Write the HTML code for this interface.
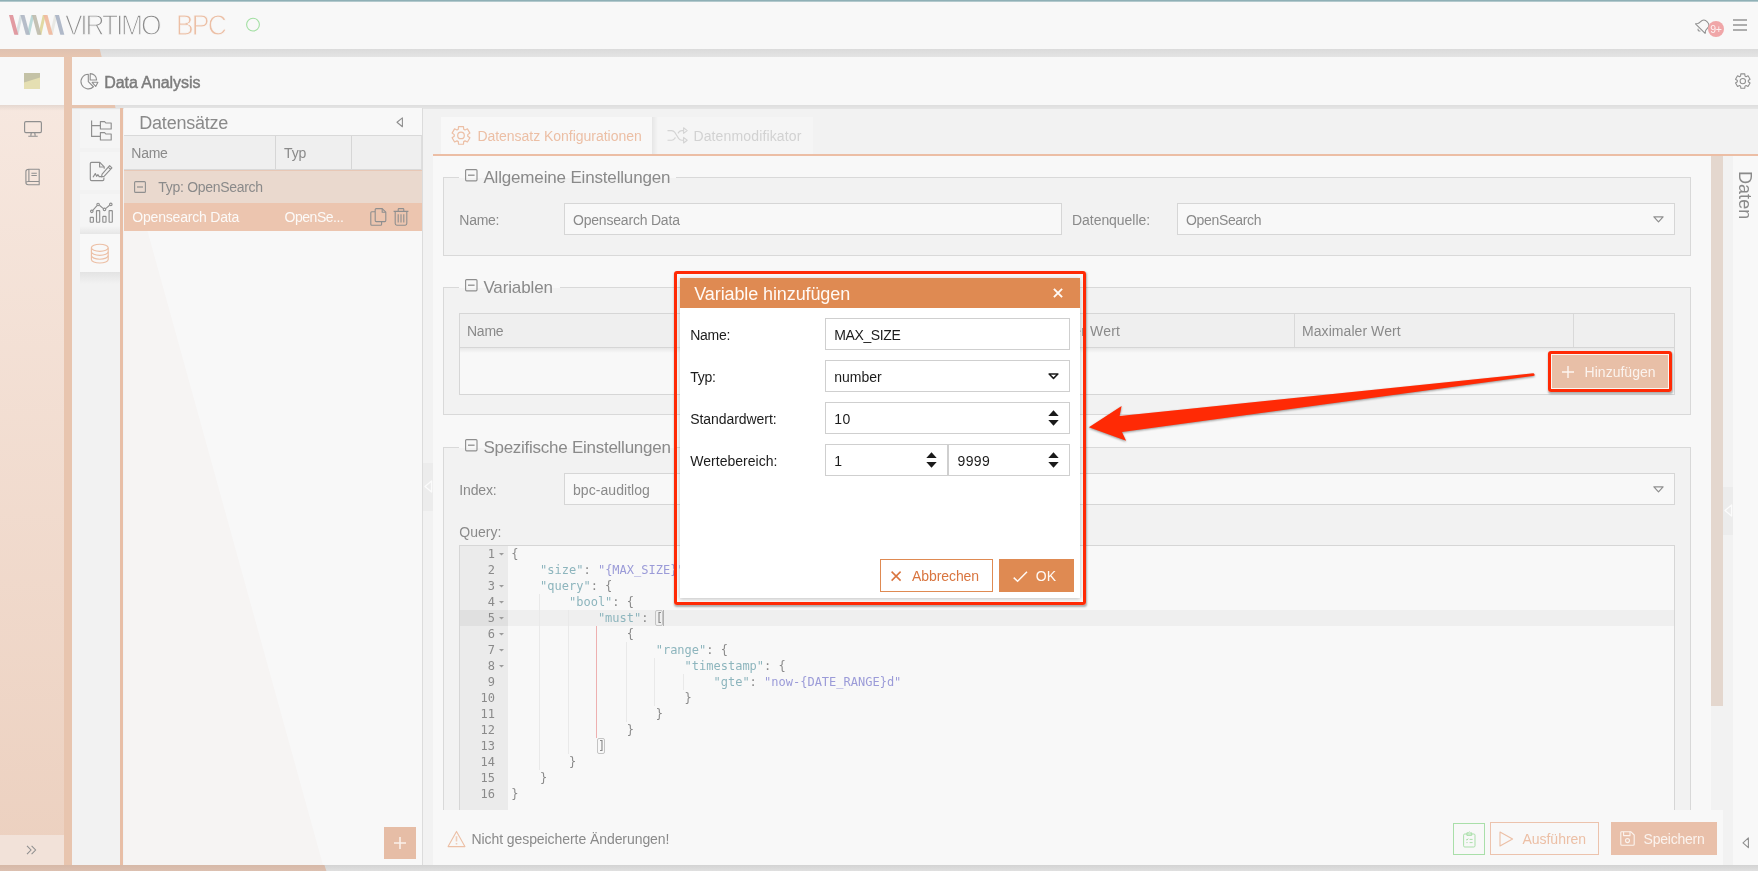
<!DOCTYPE html>
<html lang="de">
<head>
<meta charset="utf-8">
<title>Virtimo BPC - Data Analysis</title>
<style>
*{box-sizing:border-box;margin:0;padding:0}
html,body{width:1758px;height:871px;overflow:hidden}
body{background:#f2f2f2;font-family:"Liberation Sans",sans-serif;font-size:13px;color:#8c8c8c;position:relative}
.a{position:absolute}
.t{position:absolute;white-space:nowrap;line-height:1}
svg{position:absolute;overflow:visible}
/* ---------- app frame ---------- */
#topline{left:0;top:0;width:1758px;height:2px;background:linear-gradient(#8fb0b6 0,#8fb0b6 55%,#dfe8ea 100%)}
#header{left:0;top:2px;width:1758px;height:47px;background:#f8f8f8}
#band1{left:0;top:49px;width:1758px;height:8px;background:linear-gradient(#dbdbdb,#e4e4e4)}
#band1o{left:0;top:49px;width:102px;height:8px;background:linear-gradient(#dfc2b1,#e7c6b1);clip-path:polygon(0 0,99.7px 0,101.7px 100%,0 100%)}
#side{left:0;top:57px;width:64px;height:814px;background:linear-gradient(#f7e9e1,#ecd0bf)}
#sidesel{left:0;top:57px;width:64px;height:48px;background:#f8f8f8}
#vbar{left:64px;top:57px;width:8px;height:814px;background:#e8c5af}
#phead{left:72px;top:57px;width:1686px;height:48px;background:#f8f8f8}
#band2{left:72px;top:105px;width:1686px;height:3.5px;background:linear-gradient(#dedede,#e6e6e6)}
#band2o{left:72px;top:105px;width:43.6px;height:3px;background:#e6c4af;clip-path:polygon(0 0,42.8px 0,43.6px 100%,0 100%)}
#sideshadow{left:0;top:105px;width:64px;height:6px;background:linear-gradient(rgba(0,0,0,0.07),rgba(0,0,0,0))}
#bottomband{left:0;top:865px;width:1758px;height:6px;background:linear-gradient(#d3d3d3,#e0e0e0)}
#bottombando{left:0;top:865px;width:327px;height:6px;background:linear-gradient(#d6b8a7,#dcc0b0);clip-path:polygon(0 0,324.4px 0,326.4px 100%,0 100%)}
#wrap{left:0;top:0;width:1758px;height:871px;will-change:transform}
#sidefoot{left:0;top:835px;width:64px;height:30px;background:#f2e2d9}
</style>
</head>
<body>
<!-- app frame -->
<div class="a" id="header"></div>
<div class="a" id="topline"></div>
<div class="a" id="band1"></div><div class="a" id="band1o"></div>
<div class="a" id="side"></div><div class="a" id="sidesel"></div><div class="a" id="sidefoot"></div><div class="a" id="sideshadow"></div>
<div class="a" id="vbar"></div>
<div class="a" id="phead"></div>
<div class="a" id="band2"></div><div class="a" id="band2o"></div>
<div class="a" id="bottomband"></div><div class="a" id="bottombando"></div>

<div class="a" id="wrap">
<svg style="left:0px;top:0px" width="70" height="49" viewBox="0 0 70 49" ><polygon points="15.3,34.8 18.4,34.8 22.7,15.1 19.8,15.1" fill="#d9e1e3"/><polygon points="26.8,34.8 29.9,34.8 34.2,15.1 31.3,15.1" fill="#bcdada"/><polygon points="38.3,34.8 41.4,34.8 45.7,15.1 42.8,15.1" fill="#e1d9a2"/><polygon points="49.8,34.8 52.9,34.8 57.2,15.1 54.3,15.1" fill="#e9e9e5"/><polygon points="9.0,15.1 13.0,15.1 18.3,34.8 14.3,34.8" fill="#e0939b" fill-opacity="0.93"/><polygon points="20.5,15.1 24.5,15.1 29.8,34.8 25.8,34.8" fill="#b0b8c5" fill-opacity="0.93"/><polygon points="32.0,15.1 36.0,15.1 41.3,34.8 37.3,34.8" fill="#bfbcae" fill-opacity="0.93"/><polygon points="43.5,15.1 47.5,15.1 52.8,34.8 48.8,34.8" fill="#f0b99e" fill-opacity="0.93"/><polygon points="55.0,15.1 59.0,15.1 64.3,34.8 60.3,34.8" fill="#aab4c5" fill-opacity="0.93"/></svg>
<span class="t" style="left:64.9px;top:13px;font-size:26.5px;color:#8c8c8c;letter-spacing:-2.205px;-webkit-text-stroke:1.15px #f8f8f8;transform-origin:0 22px;transform:scaleY(1.1);">VIRTIMO</span>
<span class="t" style="left:176px;top:13px;font-size:26.5px;color:#ecbfa5;letter-spacing:-1.833px;-webkit-text-stroke:0.8px #f8f8f8;transform-origin:0 22px;transform:scaleY(1.08);">BPC</span>
<svg style="left:245px;top:17px" width="16" height="16" viewBox="0 0 16 16" ><circle cx="8" cy="7.6" r="6.4" fill="none" stroke="#a3dfa3" stroke-width="1.1"/></svg>
<svg style="left:1693.5px;top:16.5px" width="18" height="18" viewBox="0 0 18 18" ><g transform="rotate(45 9 9)" fill="none" stroke="#8f8f8f" stroke-width="1.05" stroke-linejoin="round" stroke-linecap="round"><path d="M2.2 12.8 L3.6 11 Q4.2 10 4.2 8 Q4.2 3 9 3 Q13.8 3 13.8 8 Q13.8 10 14.4 11 L15.8 12.8 Z"/><path d="M7.6 14.6 Q9 16.3 10.4 14.6"/></g></svg>
<div class="a" style="left:1708px;top:21px;width:16px;height:16px;background:#f0a6a8;border-radius:8px"></div>
<span class="t" style="left:1710.2px;top:24px;font-size:10.5px;color:#fdf1f1;letter-spacing:-0.392px;">9+</span>
<div class="a" style="left:1733px;top:19px;width:14px;height:2px;background:#adadad;"></div>
<div class="a" style="left:1733px;top:24px;width:14px;height:2px;background:#adadad;"></div>
<div class="a" style="left:1733px;top:29px;width:14px;height:2px;background:#adadad;"></div>
<svg style="left:1735px;top:73px" width="16" height="16" viewBox="0 0 16 16" ><path d="M5.78 0.88 L9.82 0.88 L9.98 3.05 L11.08 3.68 L13.05 2.74 L15.06 6.23 L13.26 7.47 L13.26 8.73 L15.06 9.97 L13.05 13.46 L11.08 12.52 L9.98 13.15 L9.82 15.32 L5.78 15.32 L5.62 13.15 L4.52 12.52 L2.55 13.46 L0.54 9.97 L2.34 8.73 L2.34 7.47 L0.54 6.23 L2.55 2.74 L4.52 3.68 L5.62 3.05 Z" fill="none" stroke="#8f8f8f" stroke-width="1.05" stroke-linejoin="round"/><circle cx="7.8" cy="8.1" r="2.7" fill="none" stroke="#8f8f8f" stroke-width="1.05"/></svg>

<svg style="left:24px;top:73px" width="16" height="16" viewBox="0 0 16 16" ><rect width="16" height="16" fill="#e5dfb2"/><polygon points="0,0 16,0 16,4.5 0,9.5" fill="#c4c2a6"/></svg>
<svg style="left:24px;top:121px" width="18" height="16" viewBox="0 0 18 16" ><rect x="0.6" y="0.6" width="16.8" height="11" rx="1.3" fill="none" stroke="#8f8f8f" stroke-width="1.15"/><path d="M7.3 11.6 L6.8 14.6 M10.7 11.6 L11.2 14.6 M4.3 15.2 H13.7" fill="none" stroke="#8f8f8f" stroke-width="1.15"/></svg>
<svg style="left:24.5px;top:168px" width="15" height="18" viewBox="0 0 15 18" ><path d="M3.9 1.3 H14.2 V13.5 H3.9 Z M3.9 1.3 Q0.9 1.3 0.9 3.6 V14.6 Q0.9 16.8 3.2 16.8 H14.2 V13.5 M0.9 14.9 Q0.9 13.5 3.2 13.5 H3.9 M6.4 5.2 H11.8 M6.4 7.5 H11.8" fill="none" stroke="#8f8f8f" stroke-width="1.1" stroke-linejoin="round"/></svg>
<svg style="left:26px;top:845px" width="11" height="10" viewBox="0 0 11 10" ><path d="M1 0.8 L5 5 L1 9.2 M5.6 0.8 L9.6 5 L5.6 9.2" fill="none" stroke="#8f8f8f" stroke-width="1.05"/></svg>

<svg style="left:80.6px;top:73px" width="18" height="17" viewBox="0 0 18 17" ><g fill="none" stroke="#8f8f8f" stroke-width="1.1" stroke-linejoin="round"><path d="M7.3 1.3 A7.3 7.3 0 1 0 12.46 13.76 L7.3 8.6 Z"/><path d="M9.2 0.6 A6.4 6.4 0 0 1 15.6 7 H9.2 Z"/><path d="M11.2 9.3 H16.9 L14.7 13.5 Z"/></g></svg>
<span class="t" style="left:104.3px;top:75px;font-size:16px;color:#7c7c7c;letter-spacing:-0.071px;-webkit-text-stroke:0.45px #7c7c7c;">Data Analysis</span>
<div class="a" style="left:80px;top:110px;width:40px;height:38px;background:#f5f5f5;"></div>
<div class="a" style="left:80px;top:152px;width:40px;height:38px;background:#f5f5f5;"></div>
<div class="a" style="left:80px;top:194px;width:40px;height:40px;background:linear-gradient(#f5f5f5 0,#f5f5f5 80%,#e6e6e6 100%);"></div>
<div class="a" style="left:80px;top:234px;width:40px;height:38px;background:#f8f8f8;"></div>
<div class="a" style="left:80px;top:272px;width:40px;height:12px;background:linear-gradient(#e3e3e3,#f2f2f2);"></div>
<svg style="left:76px;top:106px" width="50" height="170" viewBox="0 0 50 170" ><g fill="none" stroke="#8f8f8f" stroke-width="1.15" stroke-linejoin="round">
<path d="M15.6 14.6 V30.4 H24 M15.6 19.6 H24"/>
<path d="M24.4 15.6 h4.2 l1.2 1.4 h5.4 v6 h-10.8 z M24.4 26.6 h4.2 l1.2 1.4 h5.4 v6 h-10.8 z"/>
<path d="M28.2 62.8 V60.8 L23.8 56.3 H15.6 Q14.3 56.3 14.3 57.6 V73.3 Q14.3 74.6 15.6 74.6 H26.6 Q27.9 74.6 27.9 73.3 V71.5"/>
<path d="M23.6 56.6 V61 H28"/>
<path d="M17 71.3 L19.3 67.6 L20.6 70.3 L21.9 68.6 L23.2 70.6 H25.4"/>
<path d="M33.6 59.6 L35.9 61.9 L28.3 70.2 L25.5 70.9 L26.1 68.1 Z M32.2 61.1 L34.5 63.4"/>
<rect x="14.2" y="111.4" width="3.2" height="4.8" rx="0.5"/><rect x="20.5" y="104.6" width="3.2" height="11.6" rx="0.5"/><rect x="26.8" y="110.4" width="3.2" height="5.8" rx="0.5"/><rect x="33.1" y="104.6" width="3.2" height="11.6" rx="0.5"/>
<path d="M16.8 104.3 L21 99.6 M23.4 99.3 L27.4 102.6 M29.6 102.6 L33.6 99.3"/>
<circle cx="15.8" cy="105.3" r="1.25"/><circle cx="22.1" cy="98.5" r="1.25"/><circle cx="28.5" cy="103.4" r="1.25"/><circle cx="34.8" cy="98.4" r="1.25"/>
</g>
<g fill="none" stroke="#ecbfa5" stroke-width="1.15">
<ellipse cx="23.8" cy="141.8" rx="8.4" ry="3.6"/>
<path d="M15.4 141.8 V153.4 A8.4 3.6 0 0 0 32.2 153.4 V141.8"/>
<path d="M15.4 145.7 A8.4 3.6 0 0 0 32.2 145.7 M15.4 149.6 A8.4 3.6 0 0 0 32.2 149.6"/>
</g></svg>
<div class="a" style="left:120.4px;top:108px;width:2.8px;height:757px;background:#e8bea6;"></div>
<div class="a" style="left:124px;top:108px;width:298px;height:757px;background:#f8f8f8;"></div>
<svg style="left:0px;top:0px" width="1758" height="871" viewBox="0 0 1758 871" ><polygon points="124,231 124,865 323,865 147.5,231" fill="rgba(160,90,40,0.022)"/></svg>
<span class="t" style="left:139.3px;top:114px;font-size:18px;color:#8a8a8a;letter-spacing:-0.227px;">Datensätze</span>
<svg style="left:396px;top:117px" width="8" height="11" viewBox="0 0 8 11" ><path d="M6.4 0.9 V9.7 L1 5.3 Z" fill="none" stroke="#8f8f8f" stroke-width="1.1" stroke-linejoin="round"/></svg>
<div class="a" style="left:124px;top:135px;width:298px;height:35px;background:#efefef;border:1px solid #d9d9d9;border-left:none;border-right-color:#dedede"></div>
<div class="a" style="left:275px;top:136px;width:1px;height:33px;background:#d6d6d6;"></div>
<div class="a" style="left:351px;top:136px;width:1px;height:33px;background:#d6d6d6;"></div>
<span class="t" style="left:131.3px;top:146px;font-size:14px;color:#8a8a8a;letter-spacing:-0.25px;">Name</span>
<span class="t" style="left:284px;top:146px;font-size:14px;color:#8a8a8a;letter-spacing:-0.151px;">Typ</span>
<div class="a" style="left:124px;top:170px;width:298px;height:33px;background:#ead9ce;border-top:1px solid #e8c8b6"></div>
<svg style="left:134px;top:181px" width="12" height="12" viewBox="0 0 12 12" ><rect x="0.6" y="0.6" width="10.8" height="10.8" rx="1" fill="none" stroke="#8f8f8f" stroke-width="1.1"/><path d="M3 6 H9" stroke="#8f8f8f" stroke-width="1.2"/></svg>
<span class="t" style="left:158.3px;top:180px;font-size:14px;color:#8a8a8a;letter-spacing:-0.303px;">Typ: OpenSearch</span>
<div class="a" style="left:124px;top:203px;width:298px;height:28px;background:#ecc5af;"></div>
<span class="t" style="left:132.3px;top:210px;font-size:14px;color:#fcfaf8;letter-spacing:-0.2px;">Opensearch Data</span>
<span class="t" style="left:284.5px;top:210px;font-size:14px;color:#fcfaf8;letter-spacing:-0.467px;">OpenSe...</span>
<svg style="left:370px;top:208px" width="17" height="18" viewBox="0 0 17 18" ><g fill="none" stroke="#8f8f8f" stroke-width="1.1" stroke-linejoin="round"><path d="M5.2 1.6 Q5.2 0.6 6.2 0.6 H12.2 L15.8 4.2 V12.6 Q15.8 13.6 14.8 13.6 H6.2 Q5.2 13.6 5.2 12.6 Z"/><path d="M12.2 0.6 V4.2 H15.8"/><path d="M5 3.8 H1.8 Q0.8 3.8 0.8 4.8 V16.2 Q0.8 17.2 1.8 17.2 H10.6 Q11.6 17.2 11.6 16.2 V13.8"/></g></svg>
<svg style="left:393px;top:208px" width="16" height="18" viewBox="0 0 16 18" ><path d="M0.6 3.4 H15.4 M5.2 3.2 V1.4 Q5.2 0.6 6 0.6 H10 Q10.8 0.6 10.8 1.4 V3.2 M2.2 3.6 V15.6 Q2.2 17.2 3.8 17.2 H12.2 Q13.8 17.2 13.8 15.6 V3.6 M5.2 6.2 V14.6 M8 6.2 V14.6 M10.8 6.2 V14.6" fill="none" stroke="#8f8f8f" stroke-width="1.1"/></svg>
<div class="a" style="left:384px;top:827px;width:32px;height:32px;background:#e6bda6;"></div>
<svg style="left:393px;top:836px" width="14" height="14" viewBox="0 0 14 14" ><path d="M7 1 V13 M1 7 H13" stroke="#fbf1ea" stroke-width="1.6" fill="none"/></svg>

<div class="a" style="left:422px;top:108px;width:1px;height:757px;background:#dcdcdc;"></div>
<div class="a" style="left:423px;top:463px;width:10px;height:48px;background:#ececec;"></div>
<svg style="left:424px;top:480px" width="9" height="13" viewBox="0 0 9 13" ><path d="M7.6 1 V12 L1 6.5 Z" fill="none" stroke="#fbfbfb" stroke-width="1.3" stroke-linejoin="round"/></svg>
<div class="a" style="left:433px;top:156px;width:1290px;height:709px;background:#f8f8f8;"></div>
<div class="a" style="left:441px;top:117px;width:211px;height:37px;background:#f8f8f8;"></div>
<div class="a" style="left:652px;top:117px;width:6px;height:37px;background:linear-gradient(90deg,#e6e6e6,#f5f5f5);"></div>
<div class="a" style="left:658px;top:117px;width:155px;height:37px;background:#f5f5f5;"></div>
<div class="a" style="left:433px;top:154px;width:1325px;height:2px;background:#ecbea5;"></div>
<svg style="left:451px;top:126px" width="20" height="20" viewBox="0 0 20 20" ><path d="M7.53 0.54 L12.47 0.54 L12.70 3.16 L14.05 3.94 L16.44 2.83 L18.91 7.11 L16.75 8.62 L16.75 10.18 L18.91 11.69 L16.44 15.97 L14.05 14.86 L12.70 15.64 L12.47 18.26 L7.53 18.26 L7.30 15.64 L5.95 14.86 L3.56 15.97 L1.09 11.69 L3.25 10.18 L3.25 8.62 L1.09 7.11 L3.56 2.83 L5.95 3.94 L7.30 3.16 Z" fill="none" stroke="#ecbfa5" stroke-width="1.2" stroke-linejoin="round"/><circle cx="10" cy="9.4" r="3.3" fill="none" stroke="#ecbfa5" stroke-width="1.2"/></svg>
<span class="t" style="left:477.4px;top:129px;font-size:14px;color:#ecbfa5;letter-spacing:-0.028px;">Datensatz Konfigurationen</span>
<svg style="left:667px;top:126.8px" width="21" height="17" viewBox="0 0 21 17" ><g fill="none" stroke="#d4d4d4" stroke-width="1.1" stroke-linejoin="round"><path d="M0.5 3.6 H4.6 Q6.6 3.6 7.8 5.4 L11.6 11.4 Q12.8 13.2 14.8 13.2 H16.4 M0.5 13.2 H4.6 Q6.6 13.2 7.8 11.4 L8.4 10.4 M11 6.4 L11.6 5.4 Q12.8 3.6 14.8 3.6 H16.4"/><path d="M16.6 0.8 L20.2 3.6 L16.6 6.4 Z M16.6 10.4 L20.2 13.2 L16.6 16 Z"/></g></svg>
<span class="t" style="left:693.4px;top:129px;font-size:14px;color:#d2d2d2;letter-spacing:0.147px;">Datenmodifikator</span>
<div class="a" style="left:1711px;top:156px;width:12px;height:654px;background:#f2f2f2;"></div>
<div class="a" style="left:1711px;top:156px;width:12px;height:550px;background:#e4d7ce;"></div>
<div class="a" style="left:1723px;top:156px;width:10px;height:709px;background:#f2f2f2;"></div>
<div class="a" style="left:1723px;top:487px;width:10px;height:48px;background:#ececec;"></div>
<svg style="left:1724px;top:504px" width="9" height="13" viewBox="0 0 9 13" ><path d="M7.6 1 V12 L1 6.5 Z" fill="none" stroke="#fbfbfb" stroke-width="1.3" stroke-linejoin="round"/></svg>
<div class="a" style="left:1733px;top:156px;width:25px;height:709px;background:#f8f8f8;"></div>
<span class="t" style="left:1736.2px;top:171.2px;font-size:18px;color:#8a8a8a;letter-spacing:0.041px;transform-origin:0 0;transform:rotate(90deg) translateY(-100%);">Daten</span>
<svg style="left:1742px;top:837px" width="8" height="12" viewBox="0 0 8 12" ><path d="M6.4 0.9 V10.7 L1 5.8 Z" fill="none" stroke="#8f8f8f" stroke-width="1.1" stroke-linejoin="round"/></svg>
<div class="a" style="left:443px;top:177px;width:1248px;height:79px;background:#f2f2f2;border:1px solid #d9d9d9;"></div>
<div class="a" style="left:459px;top:177px;width:217px;height:1px;background:#f8f8f8;"></div>
<div class="a" style="left:459px;top:165px;width:217px;height:12px;background:#f8f8f8;"></div>
<svg style="left:465.3px;top:168.8px" width="13" height="13" viewBox="0 0 13 13" ><rect x="0.6" y="0.6" width="11.4" height="11.2" rx="1" fill="none" stroke="#8f8f8f" stroke-width="1.15"/><path d="M3 6.2 H9.6" stroke="#8f8f8f" stroke-width="1.3"/></svg>
<span class="t" style="left:483.4px;top:169px;font-size:17px;color:#8a8a8a;letter-spacing:-0.166px;">Allgemeine Einstellungen</span>
<span class="t" style="left:459.3px;top:213px;font-size:14px;color:#8a8a8a;letter-spacing:-0.275px;">Name:</span>
<div class="a" style="left:564px;top:203px;width:498px;height:32px;background:#f8f8f8;border:1px solid #d6d6d6;"></div>
<span class="t" style="left:573px;top:213px;font-size:14px;color:#8a8a8a;letter-spacing:-0.2px;">Opensearch Data</span>
<span class="t" style="left:1072px;top:213px;font-size:14px;color:#8a8a8a;letter-spacing:-0.047px;">Datenquelle:</span>
<div class="a" style="left:1177px;top:203px;width:498px;height:32px;background:#f8f8f8;border:1px solid #d6d6d6;"></div>
<span class="t" style="left:1186px;top:213px;font-size:14px;color:#8a8a8a;letter-spacing:-0.341px;">OpenSearch</span>
<svg style="left:1652.5px;top:216px" width="11" height="7" viewBox="0 0 11 7" ><path d="M0.9 0.8 H10.1 L5.5 5.9 Z" fill="none" stroke="#8f8f8f" stroke-width="1.2" stroke-linejoin="round"/></svg>
<div class="a" style="left:443px;top:287px;width:1248px;height:128px;background:#f2f2f2;border:1px solid #d9d9d9;"></div>
<div class="a" style="left:459px;top:287px;width:101px;height:1px;background:#f8f8f8;"></div>
<div class="a" style="left:459px;top:275px;width:101px;height:12px;background:#f8f8f8;"></div>
<svg style="left:465.3px;top:278.8px" width="13" height="13" viewBox="0 0 13 13" ><rect x="0.6" y="0.6" width="11.4" height="11.2" rx="1" fill="none" stroke="#8f8f8f" stroke-width="1.15"/><path d="M3 6.2 H9.6" stroke="#8f8f8f" stroke-width="1.3"/></svg>
<span class="t" style="left:483.4px;top:279px;font-size:17px;color:#8a8a8a;letter-spacing:-0.128px;">Variablen</span>
<div class="a" style="left:459px;top:313px;width:1216px;height:82px;background:#f8f8f8;border:1px solid #d6d6d6;"></div>
<div class="a" style="left:460px;top:314px;width:1214px;height:34px;background:#efefef;border-bottom:1px solid #d6d6d6"></div>
<div class="a" style="left:460px;top:348px;width:1214px;height:5px;background:linear-gradient(#e8e8e8,#f8f8f8);"></div>
<div class="a" style="left:1294px;top:314px;width:1px;height:33px;background:#d9d9d9;"></div>
<div class="a" style="left:1573px;top:314px;width:1px;height:33px;background:#d9d9d9;"></div>
<span class="t" style="left:467px;top:324px;font-size:14px;color:#8a8a8a;letter-spacing:-0.25px;">Name</span>
<span class="t" style="left:1024.0px;top:324px;font-size:14px;color:#8a8a8a;letter-spacing:0.153px;">Minimaler Wert</span>
<span class="t" style="left:1302px;top:324px;font-size:14px;color:#8a8a8a;letter-spacing:0.065px;">Maximaler Wert</span>
<div class="a" style="left:1551px;top:354px;width:118px;height:35px;background:#fbf6f2;"></div>
<div class="a" style="left:1552px;top:355px;width:116px;height:33px;background:#e8bfa7;"></div>
<svg style="left:1562px;top:366px" width="12" height="12" viewBox="0 0 12 12" ><path d="M6 0 V12 M0 6 H12" stroke="#fdf6f1" stroke-width="1.4" fill="none"/></svg>
<span class="t" style="left:1584.6px;top:365px;font-size:14px;color:#fbf3ee;letter-spacing:0.016px;">Hinzufügen</span>
<div class="a" style="left:443px;top:447px;width:1248px;height:380px;background:#f2f2f2;border:1px solid #d9d9d9;"></div>
<div class="a" style="left:459px;top:447px;width:217px;height:1px;background:#f8f8f8;"></div>
<div class="a" style="left:459px;top:435px;width:217px;height:12px;background:#f8f8f8;"></div>
<svg style="left:465.3px;top:438.8px" width="13" height="13" viewBox="0 0 13 13" ><rect x="0.6" y="0.6" width="11.4" height="11.2" rx="1" fill="none" stroke="#8f8f8f" stroke-width="1.15"/><path d="M3 6.2 H9.6" stroke="#8f8f8f" stroke-width="1.3"/></svg>
<span class="t" style="left:483.4px;top:439px;font-size:17px;color:#8a8a8a;letter-spacing:-0.261px;">Spezifische Einstellungen</span>
<span class="t" style="left:459.3px;top:483px;font-size:14px;color:#8a8a8a;letter-spacing:-0.148px;">Index:</span>
<div class="a" style="left:564px;top:473px;width:1111px;height:32px;background:#f8f8f8;border:1px solid #d6d6d6;"></div>
<span class="t" style="left:573px;top:483px;font-size:14px;color:#8a8a8a;letter-spacing:0.055px;">bpc-auditlog</span>
<svg style="left:1652.5px;top:486px" width="11" height="7" viewBox="0 0 11 7" ><path d="M0.9 0.8 H10.1 L5.5 5.9 Z" fill="none" stroke="#8f8f8f" stroke-width="1.2" stroke-linejoin="round"/></svg>
<span class="t" style="left:459.3px;top:525px;font-size:14px;color:#8a8a8a;letter-spacing:0.018px;">Query:</span>
<div class="a" style="left:459px;top:545px;width:1216px;height:265px;background:#f8f8f8;border:1px solid #d6d6d6;border-bottom:none"></div>
<div class="a" style="left:460px;top:546px;width:48px;height:264px;background:#ebebeb;"></div>
<div class="a" style="left:460px;top:610px;width:48px;height:16px;background:#e0e0e0;"></div>
<div class="a" style="left:508px;top:610px;width:1166px;height:16px;background:#efefef;"></div>
<div class="a" style="left:539px;top:594px;width:1px;height:16px;background:#e9e9e9;"></div>
<div class="a" style="left:539px;top:610px;width:1px;height:16px;background:#e9e9e9;"></div>
<div class="a" style="left:568px;top:610px;width:1px;height:16px;background:#e9e9e9;"></div>
<div class="a" style="left:539px;top:626px;width:1px;height:16px;background:#e9e9e9;"></div>
<div class="a" style="left:568px;top:626px;width:1px;height:16px;background:#e9e9e9;"></div>
<div class="a" style="left:596px;top:626px;width:1px;height:16px;background:#eeb0b0;"></div>
<div class="a" style="left:539px;top:642px;width:1px;height:16px;background:#e9e9e9;"></div>
<div class="a" style="left:568px;top:642px;width:1px;height:16px;background:#e9e9e9;"></div>
<div class="a" style="left:596px;top:642px;width:1px;height:16px;background:#eeb0b0;"></div>
<div class="a" style="left:626px;top:642px;width:1px;height:16px;background:#e9e9e9;"></div>
<div class="a" style="left:539px;top:658px;width:1px;height:16px;background:#e9e9e9;"></div>
<div class="a" style="left:568px;top:658px;width:1px;height:16px;background:#e9e9e9;"></div>
<div class="a" style="left:596px;top:658px;width:1px;height:16px;background:#eeb0b0;"></div>
<div class="a" style="left:626px;top:658px;width:1px;height:16px;background:#e9e9e9;"></div>
<div class="a" style="left:654px;top:658px;width:1px;height:16px;background:#e9e9e9;"></div>
<div class="a" style="left:539px;top:674px;width:1px;height:16px;background:#e9e9e9;"></div>
<div class="a" style="left:568px;top:674px;width:1px;height:16px;background:#e9e9e9;"></div>
<div class="a" style="left:596px;top:674px;width:1px;height:16px;background:#eeb0b0;"></div>
<div class="a" style="left:626px;top:674px;width:1px;height:16px;background:#e9e9e9;"></div>
<div class="a" style="left:654px;top:674px;width:1px;height:16px;background:#e9e9e9;"></div>
<div class="a" style="left:683px;top:674px;width:1px;height:16px;background:#e9e9e9;"></div>
<div class="a" style="left:539px;top:690px;width:1px;height:16px;background:#e9e9e9;"></div>
<div class="a" style="left:568px;top:690px;width:1px;height:16px;background:#e9e9e9;"></div>
<div class="a" style="left:596px;top:690px;width:1px;height:16px;background:#eeb0b0;"></div>
<div class="a" style="left:626px;top:690px;width:1px;height:16px;background:#e9e9e9;"></div>
<div class="a" style="left:654px;top:690px;width:1px;height:16px;background:#e9e9e9;"></div>
<div class="a" style="left:539px;top:706px;width:1px;height:16px;background:#e9e9e9;"></div>
<div class="a" style="left:568px;top:706px;width:1px;height:16px;background:#e9e9e9;"></div>
<div class="a" style="left:596px;top:706px;width:1px;height:16px;background:#eeb0b0;"></div>
<div class="a" style="left:626px;top:706px;width:1px;height:16px;background:#e9e9e9;"></div>
<div class="a" style="left:539px;top:722px;width:1px;height:16px;background:#e9e9e9;"></div>
<div class="a" style="left:568px;top:722px;width:1px;height:16px;background:#e9e9e9;"></div>
<div class="a" style="left:596px;top:722px;width:1px;height:16px;background:#eeb0b0;"></div>
<div class="a" style="left:539px;top:738px;width:1px;height:16px;background:#e9e9e9;"></div>
<div class="a" style="left:568px;top:738px;width:1px;height:16px;background:#e9e9e9;"></div>
<div class="a" style="left:539px;top:754px;width:1px;height:16px;background:#e9e9e9;"></div>
<svg style="left:499px;top:553px" width="5" height="3" viewBox="0 0 5 3" ><path d="M0 0 H5 L2.5 2.6 Z" fill="#9c9c9c"/></svg>
<svg style="left:499px;top:585px" width="5" height="3" viewBox="0 0 5 3" ><path d="M0 0 H5 L2.5 2.6 Z" fill="#9c9c9c"/></svg>
<svg style="left:499px;top:601px" width="5" height="3" viewBox="0 0 5 3" ><path d="M0 0 H5 L2.5 2.6 Z" fill="#9c9c9c"/></svg>
<svg style="left:499px;top:617px" width="5" height="3" viewBox="0 0 5 3" ><path d="M0 0 H5 L2.5 2.6 Z" fill="#9c9c9c"/></svg>
<svg style="left:499px;top:633px" width="5" height="3" viewBox="0 0 5 3" ><path d="M0 0 H5 L2.5 2.6 Z" fill="#9c9c9c"/></svg>
<svg style="left:499px;top:649px" width="5" height="3" viewBox="0 0 5 3" ><path d="M0 0 H5 L2.5 2.6 Z" fill="#9c9c9c"/></svg>
<svg style="left:499px;top:665px" width="5" height="3" viewBox="0 0 5 3" ><path d="M0 0 H5 L2.5 2.6 Z" fill="#9c9c9c"/></svg>
<pre class="a" style="left:460px;top:546px;width:35px;text-align:right;color:#8a8a8a;font-family:'DejaVu Sans Mono','Liberation Mono',monospace;font-size:12px;line-height:16px;">1
2
3
4
5
6
7
8
9
10
11
12
13
14
15
16
</pre>
<pre class="a" style="left:511.2px;top:546px;font-family:'DejaVu Sans Mono','Liberation Mono',monospace;font-size:12px;line-height:16px;"><span style="color:#8a8a8a">{</span>
    <span style="color:#8db5bd">"size"</span><span style="color:#8a8a8a">: </span><span style="color:#9b9bd8">"{MAX_SIZE}"</span><span style="color:#8a8a8a">,</span>
    <span style="color:#8db5bd">"query"</span><span style="color:#8a8a8a">: {</span>
        <span style="color:#8db5bd">"bool"</span><span style="color:#8a8a8a">: {</span>
            <span style="color:#8db5bd">"must"</span><span style="color:#8a8a8a">: </span><span style="color:#8a8a8a">[</span>
                <span style="color:#8a8a8a">{</span>
                    <span style="color:#8db5bd">"range"</span><span style="color:#8a8a8a">: {</span>
                        <span style="color:#8db5bd">"timestamp"</span><span style="color:#8a8a8a">: {</span>
                            <span style="color:#8db5bd">"gte"</span><span style="color:#8a8a8a">: </span><span style="color:#9b9bd8">"now-{DATE_RANGE}d"</span>
                        <span style="color:#8a8a8a">}</span>
                    <span style="color:#8a8a8a">}</span>
                <span style="color:#8a8a8a">}</span>
            <span style="color:#8a8a8a">]</span>
        <span style="color:#8a8a8a">}</span>
    <span style="color:#8a8a8a">}</span>
<span style="color:#8a8a8a">}</span>
</pre>
<div class="a" style="left:655px;top:610px;width:8px;height:16px;border:1px solid #c4c4c4;border-radius:2px"></div>
<div class="a" style="left:663px;top:610px;width:1px;height:16px;background:#b0b0b0;"></div>
<div class="a" style="left:597px;top:738px;width:8px;height:16px;border:1px solid #c4c4c4;border-radius:2px"></div>
<div class="a" style="left:433px;top:810px;width:1290px;height:55px;background:#f8f8f8;"></div>
<svg style="left:446.5px;top:830px" width="19" height="18" viewBox="0 0 19 18" ><path d="M9.5 1.4 L17.9 16.6 H1.1 Z" fill="none" stroke="#ecbfa5" stroke-width="1.1" stroke-linejoin="round"/><path d="M9.5 6.2 V11.6 M9.5 13 V14.6" stroke="#f0cdb8" stroke-width="1.6"/></svg>
<span class="t" style="left:471.4px;top:832px;font-size:14px;color:#8a8a8a;letter-spacing:-0.068px;">Nicht gespeicherte Änderungen!</span>
<div class="a" style="left:1453px;top:823px;width:32px;height:32px;background:#f8f8f8;border:1px solid #a9dfa9;"></div>
<svg style="left:1462.5px;top:830.5px" width="13" height="17" viewBox="0 0 13 17" ><g fill="none" stroke="#a9dfa9" stroke-width="1"><rect x="0.6" y="3" width="11.4" height="13" rx="1.2"/><path d="M3.9 3 V1.8 H5.3 Q6.3 0 7.3 1.8 H8.7 V3 M3.9 3 V4.4 H8.7 V3 M3.2 8.4 L4 9.2 L5.2 7.6 M6.6 8.4 H9.6 M3.4 11.6 H4.6 M6.6 11.6 H9.6"/></g></svg>
<div class="a" style="left:1490px;top:822px;width:109px;height:33px;background:#f8f8f8;border:1px solid #ecc3ad;"></div>
<svg style="left:1499px;top:831px" width="15" height="16" viewBox="0 0 15 16" ><path d="M1 1 L13.6 8 L1 15 Z" fill="none" stroke="#ecbfa5" stroke-width="1.1" stroke-linejoin="round"/></svg>
<span class="t" style="left:1522.4px;top:832px;font-size:14px;color:#ecbfa5;letter-spacing:-0.012px;">Ausführen</span>
<div class="a" style="left:1611px;top:822px;width:106px;height:33px;background:#e9c0aa;"></div>
<svg style="left:1620px;top:831px" width="15" height="15" viewBox="0 0 15 15" ><g fill="none" stroke="#fbf3ee" stroke-width="1.1" stroke-linejoin="round"><path d="M1.6 0.8 H11 L14.2 4 V13.2 Q14.2 14.2 13.2 14.2 H1.8 Q0.8 14.2 0.8 13.2 V1.6 Q0.8 0.8 1.6 0.8 Z"/><path d="M3.6 0.8 V4.6 H10 V0.8"/><circle cx="7.5" cy="9.6" r="2"/></g></svg>
<span class="t" style="left:1643.6px;top:832px;font-size:14px;color:#fbf3ee;letter-spacing:-0.245px;">Speichern</span>

<div class="a" style="left:680px;top:278px;width:400px;height:320px;background:#ffffff;box-shadow:0 1px 4px 0 rgba(0,0,0,0.22)"></div>
<div class="a" style="left:680px;top:278px;width:400px;height:30px;background:#df8a52;"></div>
<span class="t" style="left:694.3px;top:285px;font-size:18px;color:#fffaf6;letter-spacing:-0.106px;">Variable hinzufügen</span>
<svg style="left:1053px;top:288px" width="10" height="10" viewBox="0 0 10 10" ><path d="M0.9 0.9 L9.1 9.1 M9.1 0.9 L0.9 9.1" stroke="#fffaf6" stroke-width="1.9" fill="none"/></svg>
<span class="t" style="left:690.2px;top:328px;font-size:14px;color:#1c1c1c;letter-spacing:-0.275px;">Name:</span>
<span class="t" style="left:690.2px;top:370px;font-size:14px;color:#1c1c1c;letter-spacing:-0.211px;">Typ:</span>
<span class="t" style="left:690.2px;top:412px;font-size:14px;color:#1c1c1c;letter-spacing:-0.056px;">Standardwert:</span>
<span class="t" style="left:690.2px;top:454px;font-size:14px;color:#1c1c1c;letter-spacing:0.036px;">Wertebereich:</span>
<div class="a" style="left:825px;top:318px;width:245px;height:32px;background:#fff;border:1px solid #cfcfcf;"></div>
<span class="t" style="left:834.3px;top:328px;font-size:14px;color:#1c1c1c;letter-spacing:-0.402px;">MAX_SIZE</span>
<div class="a" style="left:825px;top:360px;width:245px;height:32px;background:#fff;border:1px solid #cfcfcf;"></div>
<span class="t" style="left:834.3px;top:370px;font-size:14px;color:#1c1c1c;letter-spacing:0.0px;">number</span>
<svg style="left:1047.5px;top:373px" width="11" height="7" viewBox="0 0 11 7" ><path d="M1.1 1 H9.9 L5.5 5.4 Z" fill="none" stroke="#1a1a1a" stroke-width="1.5" stroke-linejoin="round"/></svg>
<div class="a" style="left:825px;top:402px;width:245px;height:32px;background:#fff;border:1px solid #cfcfcf;"></div>
<span class="t" style="left:834.3px;top:412px;font-size:14px;color:#1c1c1c;letter-spacing:0.336px;">10</span>
<svg style="left:1047.5px;top:410.2px" width="11" height="16" viewBox="0 0 11 16" ><path d="M0.3 5.9 H10.7 L5.5 0.2 Z M0.3 10.1 H10.7 L5.5 15.7 Z" fill="#1a1a1a"/></svg>
<div class="a" style="left:825px;top:444px;width:123px;height:32px;background:#fff;border:1px solid #cfcfcf;"></div>
<div class="a" style="left:948px;top:444px;width:122px;height:32px;background:#fff;border:1px solid #cfcfcf;"></div>
<span class="t" style="left:834.3px;top:454px;font-size:14px;color:#1c1c1c;letter-spacing:0.328px;">1</span>
<svg style="left:925.5px;top:452.2px" width="11" height="16" viewBox="0 0 11 16" ><path d="M0.3 5.9 H10.7 L5.5 0.2 Z M0.3 10.1 H10.7 L5.5 15.7 Z" fill="#1a1a1a"/></svg>
<span class="t" style="left:957.6px;top:454px;font-size:14px;color:#1c1c1c;letter-spacing:0.332px;">9999</span>
<svg style="left:1047.5px;top:452.2px" width="11" height="16" viewBox="0 0 11 16" ><path d="M0.3 5.9 H10.7 L5.5 0.2 Z M0.3 10.1 H10.7 L5.5 15.7 Z" fill="#1a1a1a"/></svg>
<div class="a" style="left:880px;top:559px;width:113px;height:33px;background:#fff;border:1px solid #df8a52;"></div>
<svg style="left:891px;top:571px" width="10" height="10" viewBox="0 0 10 10" ><path d="M0.6 0.6 L9.6 9.6 M9.6 0.6 L0.6 9.6" stroke="#d9753f" stroke-width="1.5" fill="none"/></svg>
<span class="t" style="left:912px;top:569px;font-size:14px;color:#d9753f;letter-spacing:-0.075px;">Abbrechen</span>
<div class="a" style="left:999px;top:559px;width:75px;height:33px;background:#df8a52;"></div>
<svg style="left:1012.5px;top:570.5px" width="15" height="11" viewBox="0 0 15 11" ><path d="M0.7 6.6 L4.6 10.3 L14 0.8" stroke="#fffaf6" stroke-width="1.5" fill="none"/></svg>
<span class="t" style="left:1035.8px;top:569px;font-size:14px;color:#fffaf6;letter-spacing:0.125px;">OK</span>

<div class="a" style="left:674px;top:271px;width:412px;height:334px;border:3px solid #ff2a05;border-radius:3px;box-shadow:0.5px 1.5px 2px rgba(0,0,0,0.3);"></div>
<div class="a" style="left:1548px;top:351px;width:124px;height:41px;border:3px solid #ff2a05;border-radius:3px;box-shadow:0.5px 1.5px 2px rgba(0,0,0,0.3);"></div>
<svg style="left:0;top:0;filter:drop-shadow(0.5px 1.5px 1.2px rgba(0,0,0,0.4));" width="1758" height="871" viewBox="0 0 1758 871"><path d="M1088.9 427.3 L1121.6 406.1 L1119.6 416 L1533.5 373.2 Q1535.2 374.2 1534.3 375.7 L1122 432 L1126.1 440.8 Z" fill="#ff2a05"/></svg>

</div>
</body>
</html>
